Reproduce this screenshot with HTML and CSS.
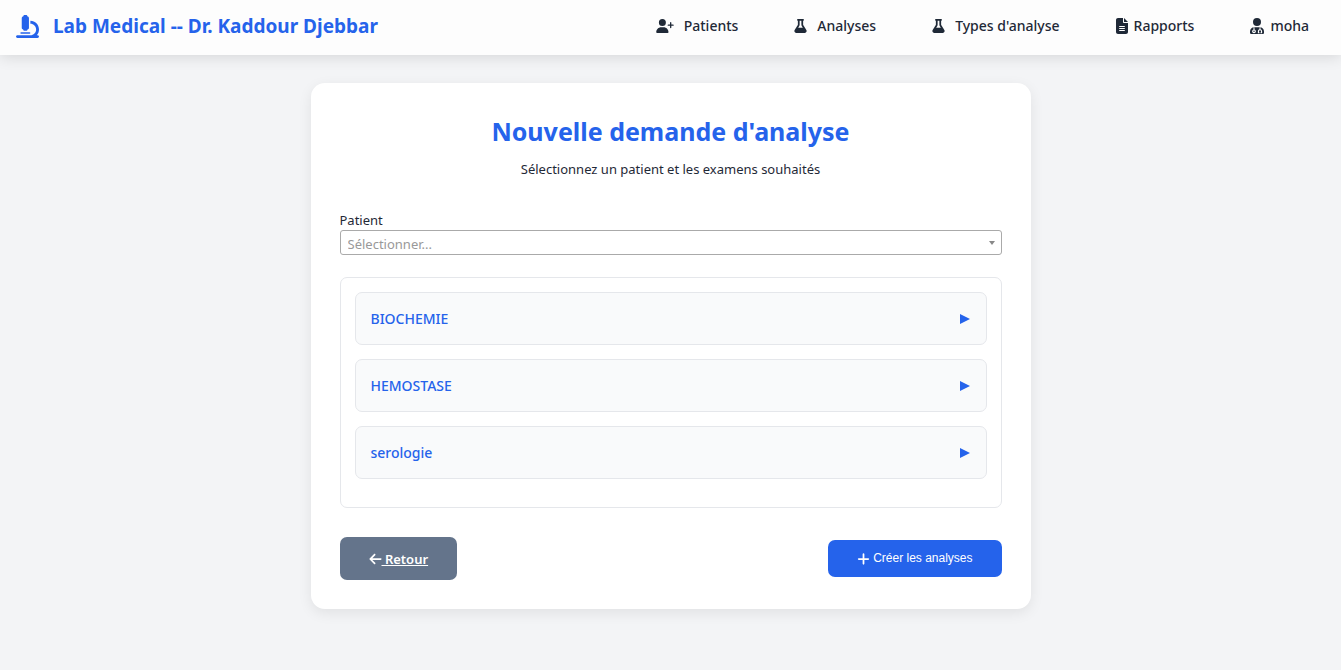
FILE: index.html
```html
<!DOCTYPE html>
<html lang="fr">
<head>
<meta charset="utf-8">
<meta name="viewport" content="width=device-width, initial-scale=1">
<title>Nouvelle demande d'analyse</title>
<link rel="stylesheet" href="styles.css">
</head>
<body>
<svg class="sprite" aria-hidden="true">
  <symbol id="flask" viewBox="0 0 448 512"><path d="M288 0H160 128C110.300 0 96 14.300 96 32s14.300 32 32 32V196.800c0 11.800-3.300 23.500-9.500 33.500L10.300 406.200C3.600 417.200 0 429.700 0 442.600C0 480.900 31.100 512 69.400 512H378.600c38.300 0 69.400-31.100 69.400-69.400c0-12.800-3.600-25.400-10.300-36.400L329.500 230.400c-6.200-10.100-9.500-21.700-9.500-33.500V64c17.700 0 32-14.300 32-32s-14.300-32-32-32H288zM192 196.800V64h64V196.800c0 23.700 6.600 46.900 19 67.100L309.500 320h-171L173 263.900c12.400-20.200 19-43.400 19-67.100z"/></symbol>
</svg>
<header class="topbar">
  <a class="brand" href="#">
    <svg class="brand-icon" viewBox="0 0 512 512" aria-hidden="true"><path d="M160 32c0-17.700 14.300-32 32-32h32c17.700 0 32 14.300 32 32c17.700 0 32 14.300 32 32V288c0 17.700-14.300 32-32 32c0 17.700-14.300 32-32 32H192c-17.700 0-32-14.300-32-32c-17.700 0-32-14.300-32-32V64c0-17.700 14.300-32 32-32zM32 448H320c70.700 0 128-57.300 128-128s-57.300-128-128-128V128c106 0 192 86 192 192c0 49.200-18.500 94-48.900 128H480c17.700 0 32 14.300 32 32s-14.300 32-32 32H32c-17.700 0-32-14.300-32-32s14.300-32 32-32zm80-64H304c8.800 0 16 7.200 16 16s-7.200 16-16 16H112c-8.800 0-16-7.200-16-16s7.200-16 16-16z"/></svg>
    Lab Medical -- Dr. Kaddour Djebbar
  </a>
  <nav class="nav">
    <a class="nav-link" href="#"><svg class="icon icon-wide" viewBox="0 0 640 512" aria-hidden="true"><path d="M96 128a128 128 0 1 1 256 0A128 128 0 1 1 96 128zM0 482.300C0 383.800 79.800 304 178.300 304h91.400C368.200 304 448 383.800 448 482.300c0 16.400-13.300 29.700-29.700 29.700H29.700C13.300 512 0 498.700 0 482.300zM504 312V248H440c-13.300 0-24-10.700-24-24s10.700-24 24-24h64V136c0-13.300 10.700-24 24-24s24 10.700 24 24v64h64c13.300 0 24 10.700 24 24s-10.700 24-24 24H552v64c0 13.300-10.700 24-24 24s-24-10.700-24-24z"/></svg>Patients</a>
    <a class="nav-link" href="#"><svg class="icon" aria-hidden="true"><use href="#flask"/></svg>Analyses</a>
    <a class="nav-link" href="#"><svg class="icon" aria-hidden="true"><use href="#flask"/></svg>Types d'analyse</a>
    <a class="nav-link nav-link-tight" href="#"><svg class="icon icon-tall" viewBox="0 0 384 512" aria-hidden="true"><path d="M64 0C28.700 0 0 28.700 0 64V448c0 35.300 28.700 64 64 64H320c35.300 0 64-28.700 64-64V160H256c-17.700 0-32-14.300-32-32V0H64zM256 0V128H384L256 0zM112 256H272c8.800 0 16 7.200 16 16s-7.200 16-16 16H112c-8.800 0-16-7.200-16-16s7.200-16 16-16zm0 64H272c8.800 0 16 7.200 16 16s-7.200 16-16 16H112c-8.800 0-16-7.200-16-16s7.200-16 16-16zm0 64H272c8.800 0 16 7.200 16 16s-7.200 16-16 16H112c-8.800 0-16-7.200-16-16s7.200-16 16-16z"/></svg>Rapports</a>
    <a class="nav-link nav-link-tight" href="#"><svg class="icon icon-user" viewBox="0 0 448 512" aria-hidden="true"><path fill-rule="evenodd" d="M224 256a128 128 0 1 0 0-256 128 128 0 1 0 0 256zM134 296C58 296 0 354 0 430v52c0 17 13 30 30 30h388c17 0 30-13 30-30v-52c0-76-58-134-134-134zM112 300h32v68a60 60 0 1 1-32 0zM128 402a24 24 0 1 0 0 48 24 24 0 1 0 0-48zM304 300h32v62c32 8 52 34 52 66v56h-52v-28h16v-28c0-22-12-34-32-34s-32 12-32 34v28h16v28h-52v-56c0-32 20-58 52-66z"/></svg>moha</a>
  </nav>
</header>
<main class="card">
  <h1 class="title">Nouvelle demande d'analyse</h1>
  <p class="subtitle">Sélectionnez un patient et les examens souhaités</p>
  <form class="form">
    <label class="label" for="patient">Patient</label>
    <div class="select-wrap">
      <select class="select" id="patient"><option>Sélectionner...</option></select>
    </div>
    <div class="groups">
      <button class="group" type="button" aria-expanded="false">BIOCHEMIE</button>
      <button class="group" type="button" aria-expanded="false">HEMOSTASE</button>
      <button class="group" type="button" aria-expanded="false">serologie</button>
    </div>
    <div class="actions">
      <a class="back" href="#"><svg class="icon" viewBox="0 0 448 512" aria-hidden="true"><path d="M9.400 233.400c-12.500 12.500-12.500 32.800 0 45.300l160 160c12.500 12.500 32.800 12.500 45.300 0s12.500-32.800 0-45.300L109.200 288 416 288c17.700 0 32-14.300 32-32s-14.300-32-32-32l-306.700 0L214.600 118.600c12.500-12.500 12.500-32.800 0-45.300s-32.800-12.500-45.300 0l-160 160z"/></svg><span class="back-text">&nbsp;Retour</span></a>
      <button class="create" type="submit"><svg class="icon" viewBox="0 0 448 512" aria-hidden="true"><path d="M256 80c0-17.700-14.300-32-32-32s-32 14.300-32 32V224H48c-17.700 0-32 14.300-32 32s14.300 32 32 32H192V432c0 17.700 14.300 32 32 32s32-14.300 32-32V288H400c17.700 0 32-14.300 32-32s-14.300-32-32-32H256V80z"/></svg>Créer les analyses</button>
    </div>
  </form>
</main>
</body>
</html>
```
FILE: styles.css
```css
* { box-sizing: border-box; }

body {
  margin: 0;
  background: #f3f4f6;
  color: #1f2937;
  font-family: "Noto Sans", "Open Sans", sans-serif;
  font-size: 13px;
  line-height: 20px;
}

a { color: inherit; text-decoration: none; }

.sprite { display: none; }

.topbar {
  display: flex;
  align-items: center;
  justify-content: space-between;
  min-height: 55px;
  padding: 0 32px 3px 16px;
  background: #fdfdfd;
  box-shadow: 0 2px 14px rgba(0, 0, 0, 0.12);
}

.brand {
  display: flex;
  align-items: center;
  gap: 14px;
  color: #2563eb;
  font-size: 19px;
  font-weight: 700;
}

.brand-icon { width: 23px; height: 23px; fill: currentColor; }

.nav { display: flex; gap: 56px; }

.nav-link {
  display: flex;
  align-items: center;
  gap: 10px;
  font-size: 14px;
  font-weight: 500;
}

.nav-link-tight { gap: 6px; }

.icon { width: 13px; height: 14px; flex: none; fill: currentColor; }
.icon-wide { width: 18px; }
.icon-tall { width: 12px; height: 16px; }
.icon-user { width: 14px; height: 16px; }

.card {
  max-width: 720px;
  margin: 28px auto;
  padding: 28px 29px 29px;
  background: #fff;
  border-radius: 14px;
  box-shadow: 0 4px 14px rgba(0, 0, 0, 0.08);
}

.title {
  margin: 0 0 8px;
  color: #2563eb;
  font-size: 25px;
  font-weight: 700;
  line-height: 40px;
  text-align: center;
}

.subtitle { margin: 0 0 31px; text-align: center; }

.label { display: block; }

.select-wrap { position: relative; }

.select-wrap::after {
  content: "";
  position: absolute;
  top: 11px;
  right: 7px;
  border: 3px solid transparent;
  border-top: 4px solid #888;
  border-bottom: 0;
  pointer-events: none;
}

.select {
  display: block;
  width: 100%;
  height: 25px;
  padding: 2px 7px 0;
  appearance: none;
  background: #fff;
  border: 1px solid #aaa;
  border-radius: 3px;
  color: #999;
  font: inherit;
}

.groups {
  display: grid;
  gap: 14px;
  margin: 22px 0 29px;
  padding: 14px 14px 28px;
  border: 1px solid #e5e7eb;
  border-radius: 7px;
}

.group {
  display: flex;
  align-items: center;
  justify-content: space-between;
  padding: 16px 16px 15px 15px;
  background: #f9fafb;
  border: 1px solid #e5e7eb;
  border-radius: 7px;
  color: #2563eb;
  font: inherit;
  font-size: 14px;
  font-weight: 500;
}

.group::after {
  content: "";
  border: 5px solid transparent;
  border-left: 10px solid #2563eb;
  border-right: 0;
}

.actions {
  display: flex;
  align-items: center;
  justify-content: space-between;
}

.back {
  display: flex;
  align-items: center;
  padding: 12px 29px 11px;
  background: #64748b;
  border-radius: 7px;
  color: #fff;
  font-weight: 600;
}

.back-text { text-decoration: underline; }

.create {
  display: flex;
  align-items: center;
  gap: 3px;
  padding: 11px 29px;
  background: #2563eb;
  border: 0;
  border-radius: 7px;
  color: #fff;
  font: 12px/15px "Liberation Sans", Arial, sans-serif;
}
```
